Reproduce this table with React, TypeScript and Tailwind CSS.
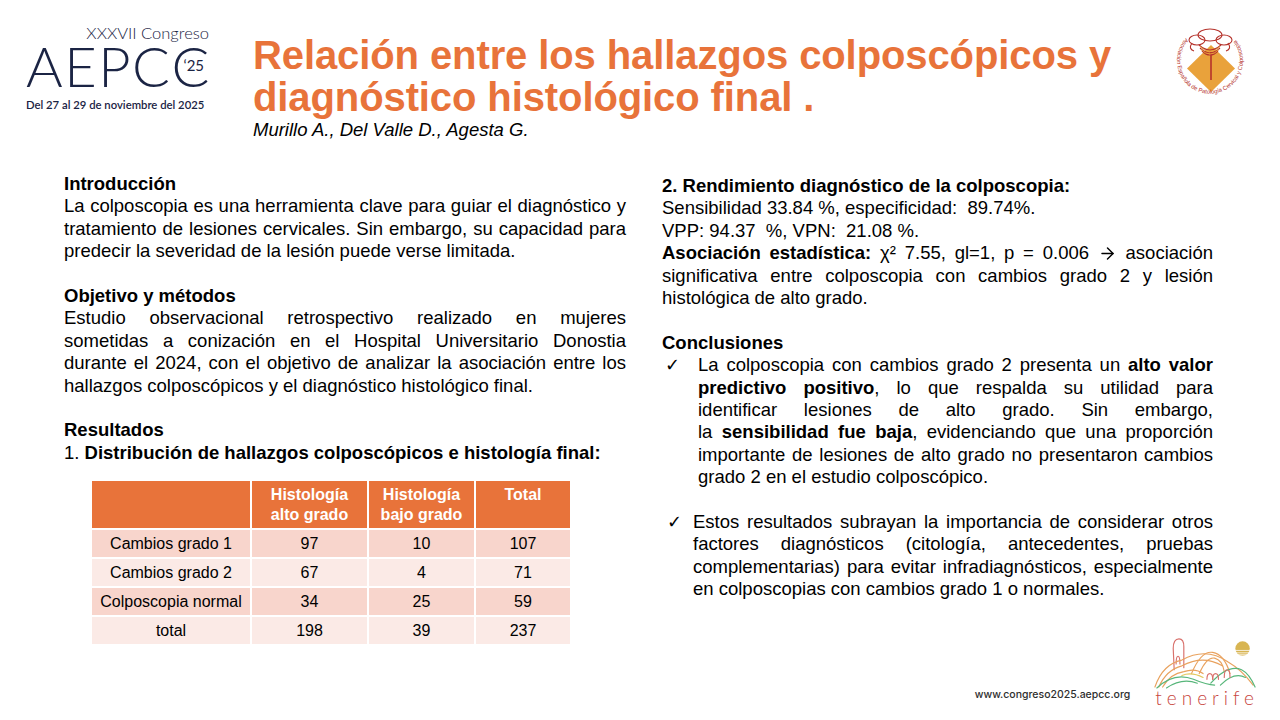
import React from "react";
import { ArrowRight } from "lucide-react";

const orange = "#E8733A";

function AepccLogo() {
  return (
    <div className="flex flex-col w-[190px] text-[#1B2444] font-['Lato','Inter',sans-serif]">
      <div className="text-right text-[16.5px] leading-[18px] font-light tracking-[0px] pr-[7px]">
        XXXVII Congreso
      </div>
      <div className="flex items-end text-[56px] leading-[52px] font-light tracking-[1.5px] -mt-[2px]">
        <span>AEPC</span>
        <span className="relative">
          C
          <span className="absolute left-[12px] top-[17px] text-[15px] leading-[16px] font-normal tracking-normal">
            ‘25
          </span>
        </span>
      </div>
      <div className="mt-[6px] text-[11.3px] leading-[13px] font-semibold whitespace-nowrap">
        Del 27 al 29 de noviembre del 2025
      </div>
    </div>
  );
}

function SocietyLogo() {
  return (
    <svg width="80" height="82" viewBox="0 0 80 82">
      <defs>
        <path id="ring" d="M 16.5 17.5 A 33 33 0 1 0 63.5 17.5" />
      </defs>
      <polygon points="41,25 65,48.5 41,72 17,48.5" fill="#E9A23B" />
      <line x1="41" y1="32" x2="41" y2="60" stroke="#B5322B" strokeWidth="1.6" />
      <g fill="none" stroke="#B5322B" strokeWidth="1.1">
        <ellipse cx="40" cy="15" rx="12" ry="6" />
        <ellipse cx="27" cy="20" rx="8" ry="5" />
        <ellipse cx="54" cy="20" rx="8" ry="5" />
        <path d="M29 25 Q40 35 51 25" />
        <path d="M30 28 Q40 38 50 28" />
        <path d="M32 31 Q40 39 48 31" />
        <path d="M22 23 Q18 29 24 31" />
        <path d="M58 23 Q62 29 56 31" />
      </g>
      <g fill="none" stroke="#E9A23B" strokeWidth="0.9">
        <path d="M30 26.5 Q40 36.5 50 26.5" />
        <path d="M31 29.5 Q40 38.5 49 29.5" />
      </g>
      <text fontSize="5.8" fill="#B5322B" fontFamily="Liberation Sans, Arial, sans-serif">
        <textPath href="#ring" startOffset="1" textLength="150" lengthAdjust="spacingAndGlyphs">
          Asociación Española de Patología Cervical y Colposcopia
        </textPath>
      </text>
    </svg>
  );
}

function TenerifeLogo() {
  return (
    <div className="flex flex-col items-center">
      <svg width="104" height="54" viewBox="0 0 108 56">
        <g fill="none" strokeWidth="1.2" strokeLinecap="round">
          <path d="M22 36 L21 14 Q21 4 27 4 Q32 4 32 12 L32 34" stroke="#D9716C" />
          <path d="M24 30 Q24 22 26 22 Q28 22 28 30" stroke="#D9716C" />
          <path d="M2 54 Q10 30 30 26 Q55 12 78 28 Q92 36 104 52" stroke="#E9A25E" />
          <path d="M6 54 Q14 36 30 32 Q52 20 72 32" stroke="#E9A25E" />
          <path d="M10 54 Q18 40 32 38 Q44 34 52 40" stroke="#E9A25E" />
          <path d="M40 40 Q50 16 62 18 Q74 20 80 40" stroke="#E9A25E" />
          <path d="M48 40 Q56 22 64 24 Q72 26 74 38" stroke="#E9A25E" />
          <path d="M4 55 Q22 38 42 46 Q56 52 64 52" stroke="#57B67A" />
          <path d="M14 55 Q30 44 46 50" stroke="#57B67A" />
          <path d="M60 50 Q78 30 92 36 Q100 40 106 54" stroke="#57B67A" />
          <path d="M70 52 Q84 38 96 44" stroke="#57B67A" />
          <path d="M56 46 Q56 40 59 40 Q62 40 62 46" stroke="#D9716C" />
          <path d="M62 46 Q62 40 65 40 Q68 40 68 46" stroke="#D9716C" />
          <path d="M74 44 Q74 36 77 36 Q80 36 80 44" stroke="#D9716C" />
          <path d="M30 42 Q40 38 52 44" stroke="#E2C85E" />
        </g>
        <circle cx="93" cy="14" r="7.5" fill="#D8B552" />
        <g stroke="#ffffff" strokeWidth="0.8">
          <line x1="84" y1="16" x2="102" y2="16" />
          <line x1="84" y1="18.5" x2="102" y2="18.5" />
          <line x1="84" y1="20.5" x2="102" y2="20.5" />
        </g>
      </svg>
      <div className="text-[19px] leading-[20px] tracking-[5px] pl-[5px] text-[#C8463E] font-light font-['Lato','Inter',sans-serif] -mt-[1px]">
        tenerife
      </div>
    </div>
  );
}

const header = ["", "Histología\nalto grado", "Histología\nbajo grado", "Total"];
const rows = [
  ["Cambios grado 1", "97", "10", "107"],
  ["Cambios grado 2", "67", "4", "71"],
  ["Colposcopia normal", "34", "25", "59"],
  ["total", "198", "39", "237"],
];

function ResultsTable() {
  return (
    <div className="grid grid-cols-[158px_115px_105px_94px] gap-x-[2px] gap-y-[2px] w-[478px] text-[16px]">
      {header.map((h, i) => (
        <div
          key={"h" + i}
          className="h-[47px] pt-[4px] text-center text-white font-bold leading-[20px] whitespace-pre-line"
          style={{ backgroundColor: orange }}
        >
          {h}
        </div>
      ))}
      {rows.map((r, ri) =>
        r.map((c, ci) => (
          <div
            key={ri + "-" + ci}
            className={
              "h-[27px] flex items-center justify-center text-black leading-[20px] " +
              (ri % 2 === 0 ? "bg-[#F8D5CC]" : "bg-[#FBEAE6]")
            }
          >
            {c}
          </div>
        ))
      )}
    </div>
  );
}

function Check() {
  return (
    <span className="font-['DejaVu_Sans',sans-serif] text-[18px] leading-[22px]">✓</span>
  );
}

// line that is stretched to the full width, like the forced breaks of the poster
function JLine(props: { children: React.ReactNode }) {
  return <span className="block text-justify [text-align-last:justify]">{props.children}</span>;
}

export default function App() {
  return (
    <div className="w-[1280px] h-[720px] bg-white overflow-hidden flex flex-col text-black font-['Liberation_Sans',Arial,sans-serif]">
      {/* cabecera */}
      <div className="h-[173px] flex shrink-0">
        <div className="w-[253px] pl-[26px] pt-[24px]">
          <AepccLogo />
        </div>
        <div className="flex-1 pt-[34px]">
          <h1 className="text-[40px] leading-[42px] font-bold tracking-[-0.1px]" style={{ color: orange }}>
            Relación entre los hallazgos colposcópicos y
            <br />
            diagnóstico histológico final .
          </h1>
          <div className="italic text-[18.5px] leading-[22px] mt-[1px]">
            Murillo A., Del Valle D., Agesta G.
          </div>
        </div>
        <div className="w-[112px] pt-[20px] pl-[2px]">
          <SocietyLogo />
        </div>
      </div>

      {/* cuerpo */}
      <div className="flex-1 flex pl-[64px] gap-[36px] text-[18.5px] leading-[22.4px]">
        <div className="w-[562px] flex flex-col">
          <p className="font-bold">Introducción</p>
          <p className="text-justify">
            La colposcopia es una herramienta clave para guiar el diagnóstico y
            tratamiento de lesiones cervicales. Sin embargo, su capacidad para
            predecir la severidad de la lesión puede verse limitada.
          </p>
          <p className="font-bold mt-[22.4px]">Objetivo y métodos</p>
          <p>
            <JLine>Estudio observacional retrospectivo realizado en mujeres</JLine>
            <JLine>sometidas a conización en el Hospital Universitario Donostia</JLine>
            <JLine>durante el 2024, con el objetivo de analizar la asociación entre los</JLine>
            <span className="block">hallazgos colposcópicos y el diagnóstico histológico final.</span>
          </p>
          <p className="font-bold mt-[22.4px]">Resultados</p>
          <p>
            1. <b>Distribución de hallazgos colposcópicos e histología final:</b>
          </p>
          <div className="mt-[17px] pl-[28px]">
            <ResultsTable />
          </div>
        </div>

        <div className="w-[551px] flex flex-col pt-[2px]">
          <p className="font-bold">2. Rendimiento diagnóstico de la colposcopia:</p>
          <p className="whitespace-pre-wrap">Sensibilidad 33.84 %, especificidad:  89.74%.</p>
          <p className="whitespace-pre-wrap">VPP: 94.37  %, VPN:  21.08 %.</p>
          <p className="text-justify">
            <b>Asociación estadística:</b> χ² 7.55, gl=1, p = 0.006{" "}
            <ArrowRight size={19} strokeWidth={1.8} className="inline-block align-[-4px]" /> asociación
            significativa entre colposcopia con cambios grado 2 y lesión
            histológica de alto grado.
          </p>
          <p className="font-bold mt-[22.4px]">Conclusiones</p>
          <div className="flex">
            <div className="w-[36px] pl-[3px]">
              <Check />
            </div>
            <div className="flex-1">
              <p className="text-justify [text-align-last:justify]">
                La colposcopia con cambios grado 2 presenta un{" "}
                <b>alto valor predictivo positivo</b>, lo que respalda su
                utilidad para identificar lesiones de alto grado. Sin embargo,
              </p>
              <p className="text-justify">
                la <b>sensibilidad fue baja</b>, evidenciando que una proporción
                importante de lesiones de alto grado no presentaron cambios
                grado 2 en el estudio colposcópico.
              </p>
            </div>
          </div>
          <div className="flex mt-[22.4px]">
            <div className="w-[31px] pl-[5px]">
              <Check />
            </div>
            <p className="flex-1 text-justify">
              Estos resultados subrayan la importancia de considerar otros
              factores diagnósticos (citología, antecedentes, pruebas
              complementarias) para evitar infradiagnósticos, especialmente en
              colposcopias con cambios grado 1 o normales.
            </p>
          </div>

          <div className="mt-auto mr-[-46px] pb-[12px] flex items-end justify-end gap-[20px]">
            <div className="pb-[7px] text-[10.5px] leading-[13px] font-medium text-[#2E2E2E] font-['Inter','Lato',sans-serif]">
              www.congreso2025.aepcc.org
            </div>
            <TenerifeLogo />
          </div>
        </div>
      </div>
    </div>
  );
}
